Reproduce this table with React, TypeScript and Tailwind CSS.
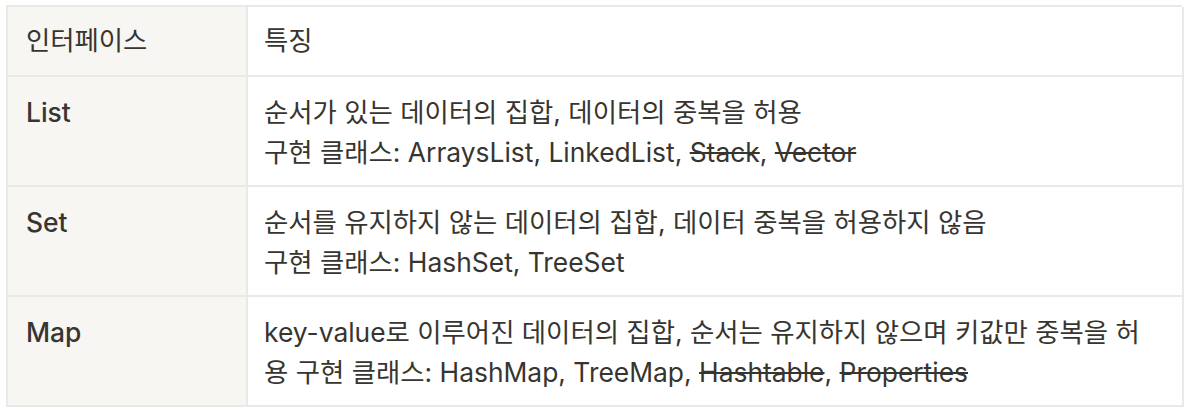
import React from 'react';

type Row = {
  name: string;
  lines: React.ReactNode[];
};

const rows: Row[] = [
  {
    name: 'List',
    lines: [
      '순서가 있는 데이터의 집합, 데이터의 중복을 허용',
      <>
        구현 클래스: ArraysList, LinkedList, <s>Stack</s>, <s>Vector</s>
      </>,
    ],
  },
  {
    name: 'Set',
    lines: [
      '순서를 유지하지 않는 데이터의 집합, 데이터 중복을 허용하지 않음',
      '구현 클래스: HashSet, TreeSet',
    ],
  },
  {
    name: 'Map',
    lines: [
      'key-value로 이루어진 데이터의 집합, 순서는 유지하지 않으며 키값만 중복을 허',
      <>
        용 구현 클래스: HashMap, TreeMap, <s>Hashtable</s>, <s>Properties</s>
      </>,
    ],
  },
];

export default function App() {
  return (
    <div className="w-[1186px] h-[410px] bg-white pt-[5px] pl-[6px] text-[#37352f] text-[26.4px] font-['Inter','Noto_Sans_CJK_KR',sans-serif]">
      <div className="w-[1176px] grid grid-cols-[240px_936px] border-l-2 border-t-2 border-[#e9e9e7]">
        <div className="h-[70px] bg-[#f7f6f3] border-r-2 border-b-2 border-[#e9e9e7] px-[18px] flex items-center">
          인터페이스
        </div>
        <div className="h-[70px] border-r-2 border-b-2 border-[#e9e9e7] px-[16px] flex items-center">
          특징
        </div>
        {rows.map((row) => (
          <React.Fragment key={row.name}>
            <div className="h-[110px] bg-[#f7f6f3] border-r-2 border-b-2 border-[#e9e9e7] px-[18px] pt-[15px] leading-[40px] font-medium">
              {row.name}
            </div>
            <div className="h-[110px] border-r-2 border-b-2 border-[#e9e9e7] px-[16px] pt-[15px] leading-[40px] whitespace-nowrap">
              {row.lines.map((line, i) => (
                <div key={i}>{line}</div>
              ))}
            </div>
          </React.Fragment>
        ))}
      </div>
    </div>
  );
}
